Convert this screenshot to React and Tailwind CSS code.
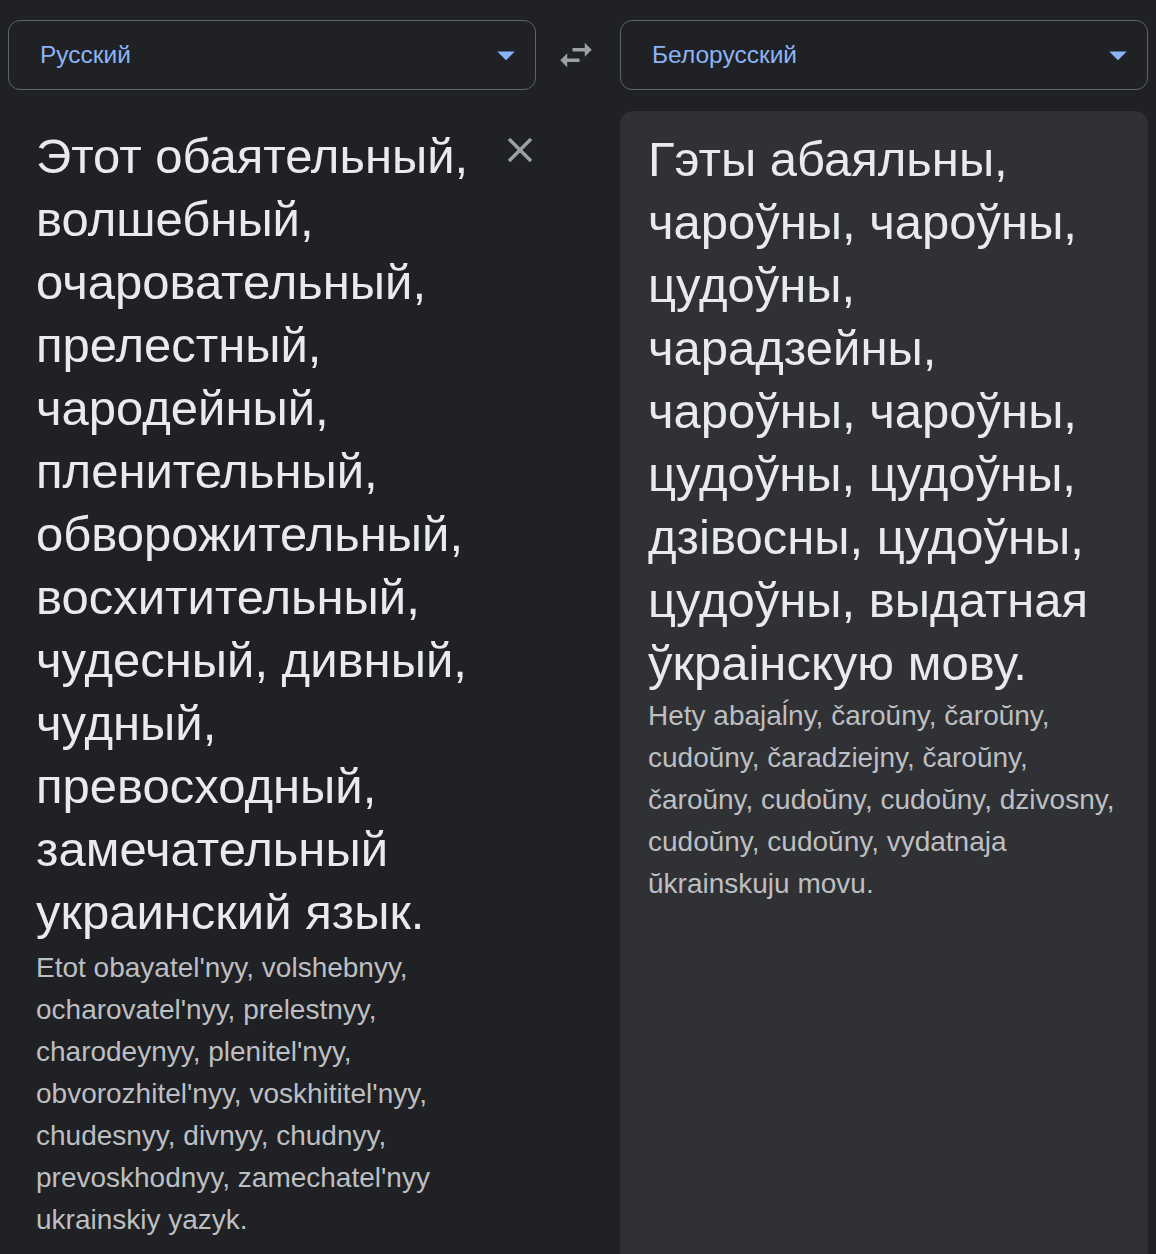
import React from "react";

function DropIcon() {
  return (
    <svg width="42" height="42" viewBox="0 0 24 24" className="shrink-0">
      <path d="M7 10l5 5 5-5z" fill="#8ab4f8" />
    </svg>
  );
}

function Select({ label }) {
  return (
    <div className="w-[528px] h-[70px] rounded-[12px] border border-[#5f6368] flex items-center justify-between pl-[31px] pr-[8px]">
      <span className="text-[24.5px] text-[#8ab4f8] leading-none">{label}</span>
      <DropIcon />
    </div>
  );
}

const leftMain =
  "Этот обаятельный, волшебный, очаровательный, прелестный, чародейный, пленительный, обворожительный, восхитительный, чудесный, дивный, чудный, превосходный, замечательный украинский язык.";
const leftTr =
  "Etot obayatel'nyy, volshebnyy, ocharovatel'nyy, prelestnyy, charodeynyy, plenitel'nyy, obvorozhitel'nyy, voskhititel'nyy, chudesnyy, divnyy, chudnyy, prevoskhodnyy, zamechatel'nyy ukrainskiy yazyk.";
const rightMain =
  "Гэты абаяльны, чароўны, чароўны, цудоўны, чарадзейны, чароўны, чароўны, цудоўны, цудоўны, дзівосны, цудоўны, цудоўны, выдатная ўкраінскую мову.";
const rightTr =
  "Hety abajaĺny, čaroŭny, čaroŭny, cudoŭny, čaradziejny, čaroŭny, čaroŭny, cudoŭny, cudoŭny, dzivosny, cudoŭny, cudoŭny, vydatnaja ŭkrainskuju movu.";

export default function App() {
  return (
    <div className="min-h-screen h-[1254px] overflow-hidden bg-[#202124] font-['Liberation_Sans',Arial,sans-serif]">
      <div className="flex px-2 pt-5">
        <Select label="Русский" />
        <div className="w-[84px] flex items-center justify-center">
          <svg width="42" height="42" viewBox="0 0 24 24" className="-ml-[4px]">
            <path
              d="M6.99 11L3 15l3.99 4v-3H14v-2H6.99v-3zM21 9l-4-4v3h-7v2h7v3l4-4z"
              fill="#9aa0a6"
            />
          </svg>
        </div>
        <Select label="Белорусский" />
      </div>
      <div className="flex px-2 mt-[21px]">
        <div className="w-[528px] relative pl-7 pt-[14px]">
          <div className="w-[448px] text-[49px] leading-[63px] text-[#e8eaed]">{leftMain}</div>
          <div className="w-[448px] mt-[3px] text-[28px] leading-[42px] text-[#bdbfc2]">{leftTr}</div>
          <button className="absolute left-[491px] top-[18px] w-[42px] h-[42px]">
            <svg width="42" height="42" viewBox="0 0 24 24">
              <path
                d="M19 6.41L17.59 5 12 10.59 6.41 5 5 6.41 10.59 12 5 17.59 6.41 19 12 13.41 17.59 19 19 17.59 13.41 12z"
                fill="#9aa0a6"
              />
            </svg>
          </button>
        </div>
        <div className="w-[84px]" />
        <div className="w-[528px] h-[1200px] bg-[#303134] rounded-t-[14px] px-7 pt-[17px]">
          <div className="text-[49px] leading-[63px] text-[#e8eaed]">{rightMain}</div>
          <div className="text-[28px] leading-[42px] text-[#bdbfc2]">{rightTr}</div>
        </div>
      </div>
    </div>
  );
}
